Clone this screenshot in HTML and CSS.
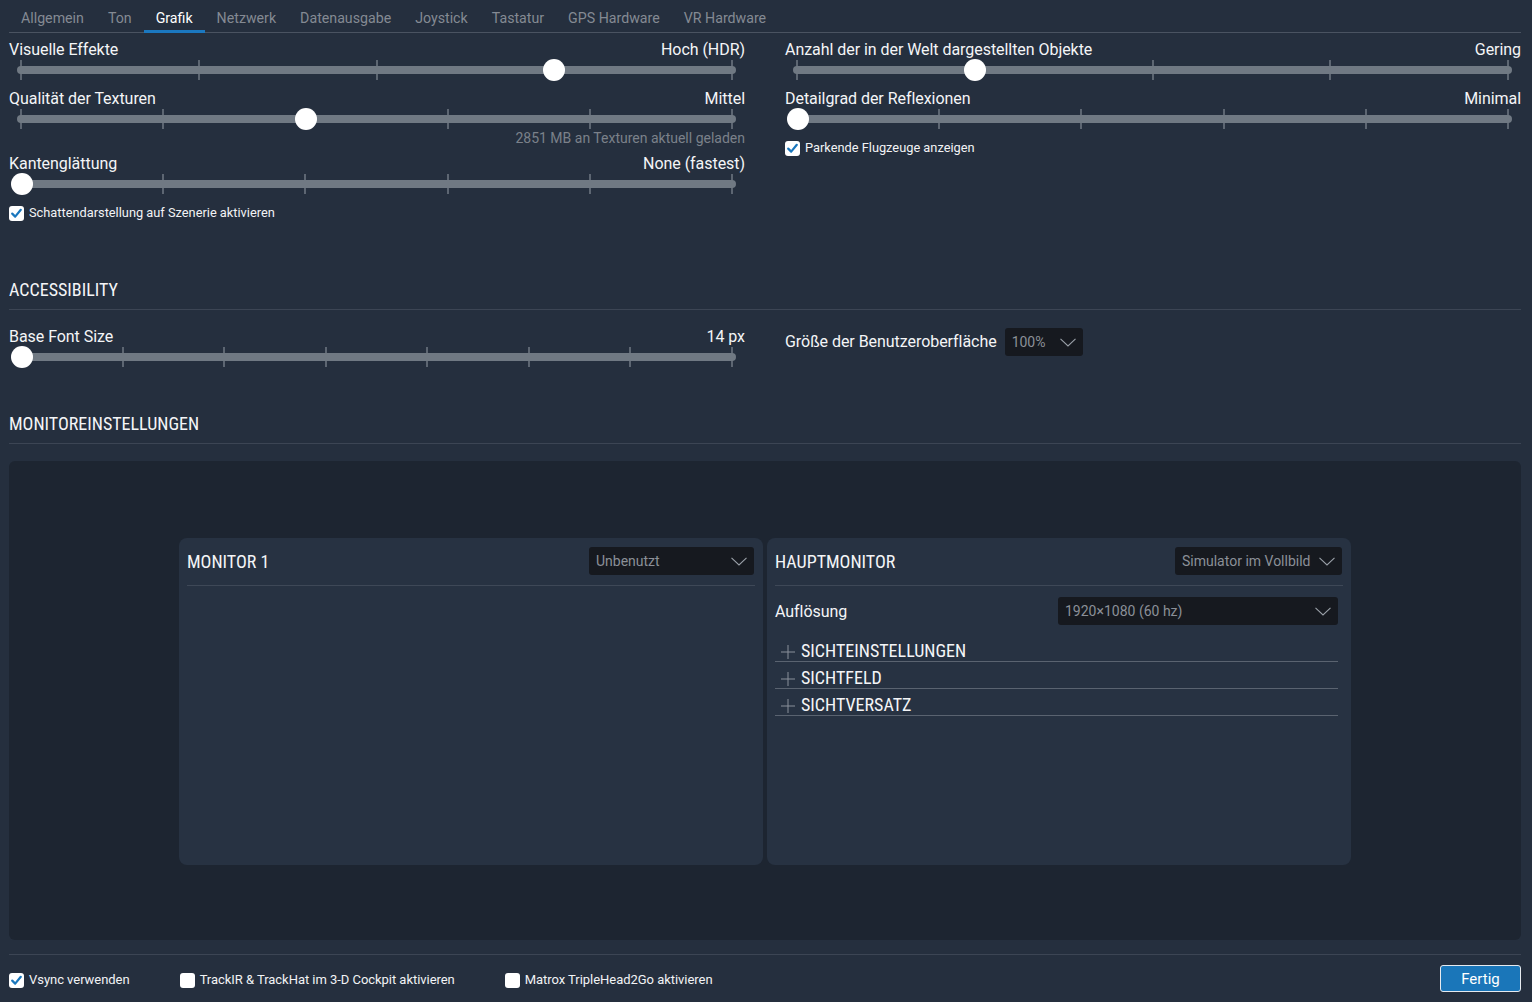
FILE: index.html
```html
<!DOCTYPE html>
<html lang="de">
<head>
<meta charset="utf-8">
<title>Grafik</title>
<link rel="stylesheet" href="styles.css">
</head>
<body>
<div class="page">
  <nav class="tabs">
    <span class="tab">Allgemein</span>
    <span class="tab">Ton</span>
    <span class="tab active">Grafik</span>
    <span class="tab">Netzwerk</span>
    <span class="tab">Datenausgabe</span>
    <span class="tab">Joystick</span>
    <span class="tab">Tastatur</span>
    <span class="tab">GPS Hardware</span>
    <span class="tab">VR Hardware</span>
  </nav>

  <section class="columns graphics">
    <div class="col">
      <div class="setting">
        <div class="setting-head"><span>Visuelle Effekte</span><span>Hoch (HDR)</span></div>
        <div class="slider">
          <i class="tick" style="left:0%"></i><i class="tick" style="left:25%"></i><i class="tick" style="left:50%"></i><i class="tick" style="left:75%"></i><i class="tick" style="left:100%"></i>
          <div class="track"></div>
          <div class="thumb-rail"><div class="thumb" style="left:75%"></div></div>
        </div>
      </div>
      <div class="setting">
        <div class="setting-head"><span>Qualität der Texturen</span><span>Mittel</span></div>
        <div class="slider">
          <i class="tick" style="left:0%"></i><i class="tick" style="left:20%"></i><i class="tick" style="left:40%"></i><i class="tick" style="left:60%"></i><i class="tick" style="left:80%"></i><i class="tick" style="left:100%"></i>
          <div class="track"></div>
          <div class="thumb-rail"><div class="thumb" style="left:40%"></div></div>
        </div>
        <div class="note">2851 MB an Texturen aktuell geladen</div>
      </div>
      <div class="setting">
        <div class="setting-head"><span>Kantenglättung</span><span>None (fastest)</span></div>
        <div class="slider">
          <i class="tick" style="left:0%"></i><i class="tick" style="left:20%"></i><i class="tick" style="left:40%"></i><i class="tick" style="left:60%"></i><i class="tick" style="left:80%"></i><i class="tick" style="left:100%"></i>
          <div class="track"></div>
          <div class="thumb-rail"><div class="thumb" style="left:0%"></div></div>
        </div>
      </div>
      <label class="check checked"><span class="box"><svg viewBox="0 0 15 15" width="15" height="15"><path d="M3.2 7.6 L6.2 10.6 L11.8 3.8" fill="none" stroke="#1a77bd" stroke-width="2.2" stroke-linecap="round" stroke-linejoin="round"/></svg></span>Schattendarstellung auf Szenerie aktivieren</label>
    </div>

    <div class="col">
      <div class="setting">
        <div class="setting-head"><span>Anzahl der in der Welt dargestellten Objekte</span><span>Gering</span></div>
        <div class="slider">
          <i class="tick" style="left:0%"></i><i class="tick" style="left:25%"></i><i class="tick" style="left:50%"></i><i class="tick" style="left:75%"></i><i class="tick" style="left:100%"></i>
          <div class="track"></div>
          <div class="thumb-rail"><div class="thumb" style="left:25%"></div></div>
        </div>
      </div>
      <div class="setting">
        <div class="setting-head"><span>Detailgrad der Reflexionen</span><span>Minimal</span></div>
        <div class="slider">
          <i class="tick" style="left:0%"></i><i class="tick" style="left:20%"></i><i class="tick" style="left:40%"></i><i class="tick" style="left:60%"></i><i class="tick" style="left:80%"></i><i class="tick" style="left:100%"></i>
          <div class="track"></div>
          <div class="thumb-rail"><div class="thumb" style="left:0%"></div></div>
        </div>
      </div>
      <label class="check checked"><span class="box"><svg viewBox="0 0 15 15" width="15" height="15"><path d="M3.2 7.6 L6.2 10.6 L11.8 3.8" fill="none" stroke="#1a77bd" stroke-width="2.2" stroke-linecap="round" stroke-linejoin="round"/></svg></span>Parkende Flugzeuge anzeigen</label>
    </div>
  </section>

  <h2 class="section-title access-title">ACCESSIBILITY</h2>
  <section class="columns access">
    <div class="col">
      <div class="setting">
        <div class="setting-head"><span>Base Font Size</span><span>14 px</span></div>
        <div class="slider">
          <i class="tick" style="left:0%"></i><i class="tick" style="left:14.2857%"></i><i class="tick" style="left:28.5714%"></i><i class="tick" style="left:42.8571%"></i><i class="tick" style="left:57.1429%"></i><i class="tick" style="left:71.4286%"></i><i class="tick" style="left:85.7143%"></i><i class="tick" style="left:100%"></i>
          <div class="track"></div>
          <div class="thumb-rail"><div class="thumb" style="left:0%"></div></div>
        </div>
      </div>
    </div>
    <div class="col">
      <div class="ui-size">
        <span class="label">Größe der Benutzeroberfläche</span>
        <div class="select select-scale"><span>100%</span><svg class="chev" viewBox="0 0 16 9" width="16" height="9"><path d="M0.5 0.8 L8 8 L15.5 0.8" fill="none" stroke="#9aa0a8" stroke-width="1.1"/></svg></div>
      </div>
    </div>
  </section>

  <h2 class="section-title monitor-title">MONITOREINSTELLUNGEN</h2>
  <section class="monitors">
    <div class="card">
      <div class="card-head">
        <span class="card-title">MONITOR 1</span>
        <div class="select select-mon1"><span>Unbenutzt</span><svg class="chev" viewBox="0 0 16 9" width="16" height="9"><path d="M0.5 0.8 L8 8 L15.5 0.8" fill="none" stroke="#9aa0a8" stroke-width="1.1"/></svg></div>
      </div>
    </div>
    <div class="card">
      <div class="card-head">
        <span class="card-title">HAUPTMONITOR</span>
        <div class="select select-main"><span>Simulator im Vollbild</span><svg class="chev" viewBox="0 0 16 9" width="16" height="9"><path d="M0.5 0.8 L8 8 L15.5 0.8" fill="none" stroke="#9aa0a8" stroke-width="1.1"/></svg></div>
      </div>
      <div class="res-row">
        <span class="label">Auflösung</span>
        <div class="select select-res"><span>1920×1080 (60 hz)</span><svg class="chev" viewBox="0 0 16 9" width="16" height="9"><path d="M0.5 0.8 L8 8 L15.5 0.8" fill="none" stroke="#9aa0a8" stroke-width="1.1"/></svg></div>
      </div>
      <div class="expanders">
        <div class="expander"><svg class="plus" viewBox="0 0 16 16" width="16" height="16"><path d="M8 1 V15 M1 8 H15" stroke="#8a909a" stroke-width="1"/></svg><span>SICHTEINSTELLUNGEN</span></div>
        <div class="expander"><svg class="plus" viewBox="0 0 16 16" width="16" height="16"><path d="M8 1 V15 M1 8 H15" stroke="#8a909a" stroke-width="1"/></svg><span>SICHTFELD</span></div>
        <div class="expander"><svg class="plus" viewBox="0 0 16 16" width="16" height="16"><path d="M8 1 V15 M1 8 H15" stroke="#8a909a" stroke-width="1"/></svg><span>SICHTVERSATZ</span></div>
      </div>
    </div>
  </section>

  <footer class="footer">
    <div class="footer-checks">
      <label class="check checked"><span class="box"><svg viewBox="0 0 15 15" width="15" height="15"><path d="M3.2 7.6 L6.2 10.6 L11.8 3.8" fill="none" stroke="#1a77bd" stroke-width="2.2" stroke-linecap="round" stroke-linejoin="round"/></svg></span>Vsync verwenden</label>
      <label class="check"><span class="box"></span>TrackIR &amp; TrackHat im 3-D Cockpit aktivieren</label>
      <label class="check"><span class="box"></span>Matrox TripleHead2Go aktivieren</label>
    </div>
    <button class="btn">Fertig</button>
  </footer>
</div>
</body>
</html>
```

FILE: styles.css
```css
* { box-sizing: border-box; }
html, body { margin: 0; padding: 0; }
body {
  background: #252f3e;
  color: #f2f3f5;
  font-family: Roboto, "Liberation Sans", sans-serif;
  width: 1532px;
  height: 1002px;
  overflow: hidden;
}
.page { padding: 0 11px 0 9px; }

/* tabs */
.tabs {
  display: flex;
  height: 33px;
  border-bottom: 1px solid #4a5361;
}
.tab {
  position: relative;
  padding: 0 12px;
  font-size: 14.2px;
  line-height: 36px;
  height: 32px;
  color: #848a93;
}
.tab.active { color: #ffffff; }
.tab.active::after {
  content: "";
  position: absolute;
  left: 0; right: 0; bottom: -1px;
  height: 3px;
  background: #1b78c0;
}

/* columns */
.columns {
  display: grid;
  grid-template-columns: 736px 736px;
  column-gap: 40px;
}
.graphics { padding-top: 6px; }
.col { display: flex; flex-direction: column; gap: 7px; }

.setting-head {
  display: flex;
  justify-content: space-between;
  height: 20px;
  padding-top: 1px;
  font-size: 16px;
  letter-spacing: -0.05px;
  line-height: 20px;
  color: #f4f5f7;
}
.slider {
  position: relative;
  height: 22px;
  margin: 0 13px 0 12px;
}
.tick {
  position: absolute;
  top: 1px;
  width: 2px;
  height: 20px;
  margin-left: -1px;
  background: #5d6672;
}
.track {
  position: absolute;
  left: -4px; right: -4px;
  top: 7px;
  height: 8px;
  border-radius: 4px;
  background: #707983;
}
.thumb-rail {
  position: absolute;
  left: 1px; right: 1px;
  top: 0; height: 22px;
}
.thumb {
  position: absolute;
  top: 0;
  width: 22px;
  height: 22px;
  margin-left: -11px;
  border-radius: 50%;
  background: #ffffff;
}
.note {
  text-align: right;
  font-size: 14px;
  line-height: 16px;
  color: #7b818a;
}

.check {
  display: flex;
  align-items: center;
  gap: 5px;
  font-size: 12.8px;
  line-height: 16px;
  color: #f2f3f5;
  margin-top: 3px;
}
.box {
  width: 15px;
  height: 15px;
  border-radius: 3px;
  background: #ffffff;
  display: block;
  flex: none;
}
.box svg { display: block; }

/* section titles */
.section-title {
  margin: 0;
  font-family: "Roboto Condensed", Roboto, sans-serif;
  font-weight: 400;
  font-size: 18px;
  line-height: 20px;
  padding-bottom: 9px;
  border-bottom: 1px solid #3c4554;
  color: #f4f5f7;
}
.access-title { margin-top: 59px; }
.access { padding-top: 16px; }
.monitor-title { margin-top: 46px; }

.ui-size {
  display: flex;
  align-items: center;
  gap: 8px;
  padding-top: 2px;
}
.label { font-size: 16px; line-height: 20px; letter-spacing: -0.05px; color: #f4f5f7; }

.select {
  display: flex;
  align-items: center;
  justify-content: space-between;
  height: 28px;
  padding: 0 7px 0 7px;
  border-radius: 3px;
  background: #16191f;
  color: #8b9098;
  font-size: 14px;
}
.chev { display: block; flex: none; }
.select-scale { width: 78px; }
.select-mon1 { width: 165px; }
.select-main { width: 167px; }
.select-res { width: 280px; }

/* monitors */
.monitors {
  margin-top: 17px;
  height: 479px;
  padding-top: 2px;
  background: #1d2531;
  border-radius: 6px;
  display: flex;
  justify-content: center;
  align-items: center;
  gap: 4px;
}
.card {
  width: 584px;
  height: 327px;
  background: #273242;
  border-radius: 8px;
  padding: 0 8px;
}
.card-head {
  display: flex;
  justify-content: space-between;
  align-items: center;
  padding: 9px 1px 10px 0;
  border-bottom: 1px solid #3e4857;
}
.card-title {
  font-family: "Roboto Condensed", Roboto, sans-serif;
  font-size: 18px;
  color: #f4f5f7;
}
.res-row {
  display: flex;
  justify-content: space-between;
  align-items: center;
  margin-top: 11px;
  padding-right: 5px;
}
.res-row .label { padding-top: 1px; }
.expanders { margin-top: 10px; margin-right: 5px; }
.expander {
  display: flex;
  align-items: center;
  gap: 5px;
  padding-top: 6px;
  padding-left: 5px;
  line-height: 20px;
  border-bottom: 1px solid #5a6370;
  font-family: "Roboto Condensed", Roboto, sans-serif;
  font-size: 18px;
  color: #f4f5f7;
}
.plus { display: block; flex: none; margin-top: 2px; }

/* footer */
.footer {
  margin-top: 14px;
  border-top: 1px solid #3c4554;
  padding-top: 10px;
  display: flex;
  justify-content: space-between;
  align-items: center;
}
.footer-checks { display: flex; gap: 50px; padding-top: 3px; }
.footer-checks .check { margin-top: 0; font-size: 13px; letter-spacing: -0.04px; }
.btn {
  width: 81px;
  height: 27px;
  border: 1px solid #e6eaef;
  border-radius: 3px;
  background: #1a76b9;
  color: #ffffff;
  font-family: Roboto, sans-serif;
  font-size: 15px;
  padding: 0;
}
```
